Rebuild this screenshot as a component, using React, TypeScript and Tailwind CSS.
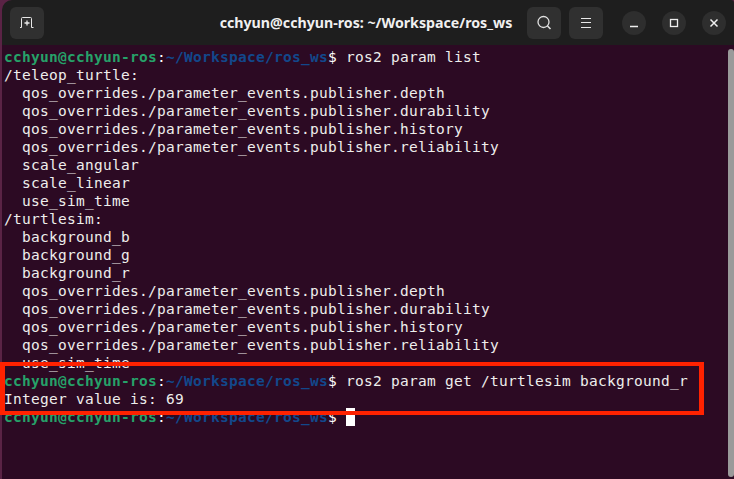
const P = () => (
  <>
    <span className="font-bold text-[#26a269]">cchyun@cchyun-ros</span>
    <span className="text-white">:</span>
    <span className="font-bold text-[#12488b]">~/Workspace/ros_ws</span>
    <span className="text-white">$ </span>
  </>
);

const listLines = [
  "/teleop_turtle:",
  "  qos_overrides./parameter_events.publisher.depth",
  "  qos_overrides./parameter_events.publisher.durability",
  "  qos_overrides./parameter_events.publisher.history",
  "  qos_overrides./parameter_events.publisher.reliability",
  "  scale_angular",
  "  scale_linear",
  "  use_sim_time",
  "/turtlesim:",
  "  background_b",
  "  background_g",
  "  background_r",
  "  qos_overrides./parameter_events.publisher.depth",
  "  qos_overrides./parameter_events.publisher.durability",
  "  qos_overrides./parameter_events.publisher.history",
  "  qos_overrides./parameter_events.publisher.reliability",
  "  use_sim_time",
];

export default function App() {
  return (
    <div className="relative w-[734px] h-[479px] bg-[#5a2345] overflow-hidden pl-[2px]">
      <div className="relative h-full flex flex-col rounded-tl-[10px] rounded-tr-[3px] overflow-hidden">
        <div className="h-[45px] shrink-0 bg-[#1e1e1e] flex items-center px-[8px]">
          <div className="flex-1 flex">
            <div className="w-[34px] h-[32px] rounded-md bg-[#303030] flex items-center justify-center">
              <svg width="16" height="14" viewBox="0 0 16 14" fill="none" stroke="#e8e8e8" strokeWidth="1">
                <path d="M1 11.5h1.5V2.5q0-1 1-1h8q1 0 1 1v9H14.500" />
                <path d="M8 4.500v5M5.500 7h5" strokeWidth="1.3" />
              </svg>
            </div>
          </div>
          <div className="mr-[4px] text-center text-[14.2px] font-bold text-[#f0f0f0] [font-family:'Noto_Sans',sans-serif]">
            cchyun@cchyun-ros: ~/Workspace/ros_ws
          </div>
          <div className="flex-1 flex items-center justify-end">
            <div className="flex items-center gap-[8px]">
              <div className="w-[34px] h-[32px] rounded-md bg-[#303030] flex items-center justify-center">
                <svg width="16" height="16" viewBox="0 0 16 16" fill="none" stroke="#e0e0e0" strokeWidth="1.300">
                  <circle cx="7.500" cy="7" r="5.500" />
                  <path d="M11.500 11l3 3" strokeWidth="1.600" />
                </svg>
              </div>
              <div className="w-[34px] h-[32px] rounded-md bg-[#303030] flex items-center justify-center">
                <svg width="12" height="12" viewBox="0 0 12 12" fill="none" stroke="#e8e8e8" strokeWidth="1">
                  <path d="M1 1.500h10M1 5.500h10M1 10.500h10" />
                </svg>
              </div>
            </div>
            <div className="flex items-center gap-[16px] ml-[19px]">
              <div className="w-[24px] h-[24px] rounded-full bg-[#2e2e2e] flex items-center justify-center">
                <svg width="12" height="12" viewBox="0 0 12 12" fill="none" stroke="#eeeeee" strokeWidth="1.300">
                  <path d="M2 9.500h8" />
                </svg>
              </div>
              <div className="w-[24px] h-[24px] rounded-full bg-[#2e2e2e] flex items-center justify-center">
                <svg width="12" height="12" viewBox="0 0 12 12" fill="none" stroke="#eeeeee" strokeWidth="1.300">
                  <rect x="2.500" y="2.500" width="7" height="7" />
                </svg>
              </div>
              <div className="w-[24px] h-[24px] rounded-full bg-[#2e2e2e] flex items-center justify-center">
                <svg width="12" height="12" viewBox="0 0 12 12" fill="none" stroke="#eeeeee" strokeWidth="1.500">
                  <path d="M2.500 2.500l7 7M9.500 2.500l-7 7" />
                </svg>
              </div>
            </div>
          </div>
        </div>
        <div className="relative flex-1 bg-[#2c0a23] pl-[2px] pt-[3px] [font-family:'DejaVu_Sans_Mono',monospace] text-[14.5px] leading-[18px] tracking-[0.27px] text-[#eeeeec] whitespace-pre">
          <div><P />ros2 param list</div>
          {listLines.map((l, i) => (
            <div key={i}>{l}</div>
          ))}
          <div><P />ros2 param get /turtlesim background_r</div>
          <div>Integer value is: 69</div>
          <div className="flex">
            <span><P /></span>
            <span className="w-[9px] h-[18px] bg-white" />
          </div>
          <div className="absolute right-0 top-[4px] bottom-[2px] w-[6px] rounded-[3px] bg-[#9a9a9a]" />
        </div>
      </div>
      <div className="absolute left-0 top-[362px] w-[704px] h-[53px] border-[4px] border-x-[5px] border-[#ff2200]" />
    </div>
  );
}
